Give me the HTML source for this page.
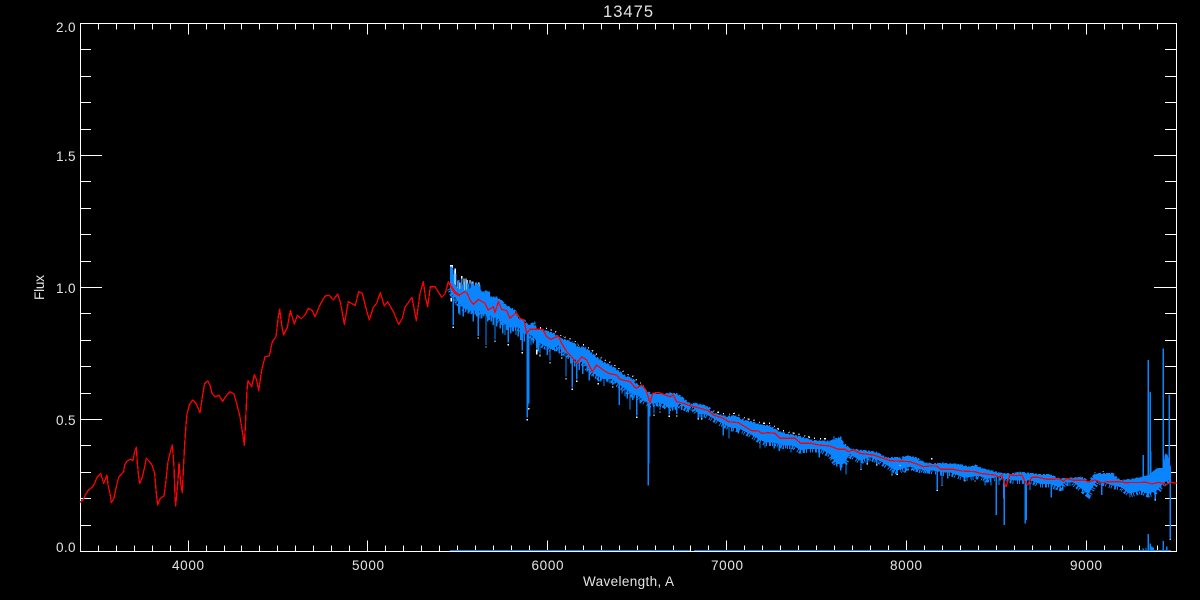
<!DOCTYPE html>
<html>
<head>
<meta charset="utf-8">
<title>13475</title>
<style>
html,body{margin:0;padding:0;background:#000;width:1200px;height:600px;overflow:hidden}
svg{display:block}
text{font-family:"Liberation Sans",sans-serif;fill:#e4e4e4;font-size:13.5px}
.c *{vector-effect:non-scaling-stroke;shape-rendering:crispEdges}
.b{fill:#0a84ff;stroke:none}
.s{fill:none;stroke:#0a84ff;stroke-width:1.4}
.w{fill:none;stroke:#fff;stroke-width:1.4}
.r{fill:none;stroke:#f00;stroke-width:1.3;stroke-linejoin:round}
.ax{fill:none;stroke:#fff;stroke-width:1;shape-rendering:crispEdges}
.cb{fill:none;stroke:#0a84ff;stroke-width:7;stroke-dasharray:1 1 1 2 2 1 1 3}
.cw{fill:none;stroke:#fff;stroke-width:1.4;stroke-dasharray:1 3 2 4 1 5}
.n{fill:none;stroke:#000;stroke-width:5;stroke-dasharray:1 3 2 2 1 4 1 2}
</style>
</head>
<body>
<svg width="1200" height="600" viewBox="0 0 1200 600" xmlns="http://www.w3.org/2000/svg">
<rect width="1200" height="600" fill="#000"/>

<!-- axes -->
<path class="ax" d="M80.5 23.5H1176.5V551.5H80.5Z"/>
<g id="xt">
<path class="ax" transform="translate(0,23.5)" d="M98.5 0v6M116.5 0v6M134.5 0v6M152.5 0v6M170.5 0v6M188.5 0v11M206.5 0v6M224.5 0v6M241.5 0v6M259.5 0v6M277.5 0v6M295.5 0v6M313.5 0v6M331.5 0v6M349.5 0v6M367.5 0v11M385.5 0v6M403.5 0v6M421.5 0v6M439.5 0v6M457.5 0v6M475.5 0v6M493.5 0v6M511.5 0v6M529.5 0v6M547.5 0v11M565.5 0v6M583.5 0v6M601.5 0v6M619.5 0v6M637.5 0v6M655.5 0v6M673.5 0v6M690.5 0v6M708.5 0v6M726.5 0v11M744.5 0v6M762.5 0v6M780.5 0v6M798.5 0v6M816.5 0v6M834.5 0v6M852.5 0v6M870.5 0v6M888.5 0v6M906.5 0v11M924.5 0v6M942.5 0v6M960.5 0v6M978.5 0v6M996.5 0v6M1014.5 0v6M1032.5 0v6M1050.5 0v6M1068.5 0v6M1086.5 0v11M1104.5 0v6M1122.5 0v6M1139.5 0v6M1157.5 0v6"/>
<path class="ax" transform="matrix(1,0,0,-1,0,551.5)" d="M98.5 0v6M116.5 0v6M134.5 0v6M152.5 0v6M170.5 0v6M188.5 0v11M206.5 0v6M224.5 0v6M241.5 0v6M259.5 0v6M277.5 0v6M295.5 0v6M313.5 0v6M331.5 0v6M349.5 0v6M367.5 0v11M385.5 0v6M403.5 0v6M421.5 0v6M439.5 0v6M457.5 0v6M475.5 0v6M493.5 0v6M511.5 0v6M529.5 0v6M547.5 0v11M565.5 0v6M583.5 0v6M601.5 0v6M619.5 0v6M637.5 0v6M655.5 0v6M673.5 0v6M690.5 0v6M708.5 0v6M726.5 0v11M744.5 0v6M762.5 0v6M780.5 0v6M798.5 0v6M816.5 0v6M834.5 0v6M852.5 0v6M870.5 0v6M888.5 0v6M906.5 0v11M924.5 0v6M942.5 0v6M960.5 0v6M978.5 0v6M996.5 0v6M1014.5 0v6M1032.5 0v6M1050.5 0v6M1068.5 0v6M1086.5 0v11M1104.5 0v6M1122.5 0v6M1139.5 0v6M1157.5 0v6"/>
<path class="ax" transform="translate(80,0)" d="M0 49.5h11M0 76.5h11M0 102.5h11M0 129.5h11M0 155.5h22M0 181.5h11M0 208.5h11M0 234.5h11M0 261.5h11M0 287.5h22M0 313.5h11M0 340.5h11M0 366.5h11M0 393.5h11M0 419.5h22M0 445.5h11M0 472.5h11M0 498.5h11M0 525.5h11"/>
<path class="ax" transform="matrix(-1,0,0,1,1176,0)" d="M0 49.5h11M0 76.5h11M0 102.5h11M0 129.5h11M0 155.5h22M0 181.5h11M0 208.5h11M0 234.5h11M0 261.5h11M0 287.5h22M0 313.5h11M0 340.5h11M0 366.5h11M0 393.5h11M0 419.5h22M0 445.5h11M0 472.5h11M0 498.5h11M0 525.5h11"/>
</g>

<!-- labels -->
<text x="603" y="17" style="font-size:16.5px" textLength="50">13475</text>
<text x="56" y="32" textLength="19.5">2.0</text>
<text x="56" y="161" textLength="19.5">1.5</text>
<text x="56" y="293" textLength="19.5">1.0</text>
<text x="56" y="425" textLength="19.5">0.5</text>
<text x="56" y="552" textLength="19.5">0.0</text>
<text x="172" y="570" textLength="32">4000</text>
<text x="352" y="570" textLength="32">5000</text>
<text x="531.5" y="570" textLength="32">6000</text>
<text x="711" y="570" textLength="32">7000</text>
<text x="890" y="570" textLength="32">8000</text>
<text x="1070" y="570" textLength="32">9000</text>
<text x="583" y="586" textLength="91">Wavelength, A</text>
<text transform="translate(44,300) rotate(-90)" textLength="25">Flux</text>

<!-- spectrum: 5450-6900 A -->
<g class="c" transform="translate(430,250) scale(.33333)">
<path class="w" d="M62 45V80M67 45V75M76 55V110M84 92V120M90 98V120M95 78V120M102 85V120M108 85V120M112 90V120M120 90V120M126 94V120M138 97V110M146 97V110"/>
<path class="w" transform="translate(0,4)" d="M64 140V150M70 225V230M145 258V262M168 285V289M195 268V272M235 278V282M277 302V306M292 503V507M296 470V474M320 295V310M330 310V316M360 332V336M395 318V322M408 380V384M427 412V416M440 388V392M505 395V399M548 405V409M620 496V500M672 490V494M690 480V484M718 493V497M740 492V496"/>
<path class="cw" transform="translate(0,-6)" d="M300 238L345 240L375 250L395 265L430 275L445 290L465 290L495 315L520 335L545 345L565 360L590 378L610 385L625 405L640 405"/>
<path class="b" d="M60 50L68 50L72 100L85 115L100 120L115 118L130 110L145 100L155 125L175 122L180 140L200 140L215 150L230 165L250 175L262 185L265 205L285 208L295 225L315 212L320 235L345 240L375 250L395 265L430 275L445 290L465 290L495 315L520 335L545 345L565 360L590 378L610 385L625 405L640 405L650 420L665 430L700 430L720 428L745 430L780 460L780 480L765 472L750 462L735 470L715 474L700 462L680 457L660 462L640 452L625 437L605 432L580 412L565 402L545 387L520 387L500 377L480 362L460 337L445 332L425 322L405 307L385 287L365 297L345 287L325 277L305 257L285 247L265 232L245 232L225 222L205 207L185 197L165 192L145 182L125 182L105 177L90 162L75 142L62 125L60 115Z"/>
<path class="n" transform="translate(0,-5)" d="M160 125L175 122L180 140L200 140L215 150L230 165L250 175L262 185L265 205L285 208L295 225L315 212L320 235L345 240L375 250L395 265L430 275L445 290L465 290L495 315L520 335L545 345L565 360L590 378L610 385L625 405L640 405L650 420L665 430L700 430L720 428L745 430L780 460"/>
<path class="cb" d="M60 115L75 142L90 162L105 177L125 182L145 182L165 192L185 197L205 207L225 222L245 232L265 232L285 247L305 257L325 277L345 287L365 297L385 287L405 307L425 322L445 332L460 337L480 362L500 377L520 387L545 387L565 402L580 412L605 432L625 437L640 452L660 462L680 457L700 462L715 474L735 470L750 462L765 472L780 480"/>
<path class="s" d="M64 55V140M70 100V225M72 60V150M78 70V165M86 90V190M90 120V195M95 85V170M100 105V200M106 95V175M111 90V185M115 100V175M120 100V185M125 100V190M130 95V215M135 105V195M140 100V200M145 100V258M150 105V205M155 135V205M161 125V200M168 120V285M173 125V215M178 125V210M184 140V215M190 145V225M195 150V268M200 140V230M205 150V190M211 150V235M218 155V250M225 170V255M230 170V240M235 180V278M242 180V250M250 180V245M258 190V255M265 205V260M272 205V270M277 215V302M283 210V275M292 235V503M294 235V470M296 235V460M303 235V285M310 225V280M320 240V295M325 240V305M330 250V310M338 240V290M345 250V300M352 250V315M360 260V332M368 255V300M380 270V305M388 265V310M395 275V318M402 270V320M408 280V380M415 280V325M422 280V340M427 290V412M434 285V350M440 300V388M448 295V360M458 305V372M465 300V350M472 320V365M478 330V392M490 320V380M498 330V385M505 340V395M512 335V385M522 350V408M530 350V395M540 350V400M548 360V405M556 360V400M568 380V465M576 380V430M585 390V440M592 385V445M600 400V478M608 395V450M620 410V496M630 410V460M640 420V445M657 430V540M659 430V500M672 430V490M682 435V470M690 435V480M703 435V475M718 435V493M728 435V480M740 440V492M755 450V480M765 460V480M775 465V488"/>
</g>

<!-- spectrum: 6900-8000 A -->
<g class="c" transform="translate(630,370) scale(.33333)">
<path class="s" d="M55 80V347M56 80V280M57 80V280"/>
<path class="cw" transform="translate(0,-5)" d="M250 128L290 138L315 135L345 150L370 155L400 165L420 165L445 182L470 190L510 198L550 210L600 212"/>
<path class="b" d="M180 107L192 97L225 105L240 112L250 128L290 138L315 135L345 150L370 155L400 165L420 165L445 182L470 190L510 198L550 210L600 212L615 205L630 200L640 215L660 235L700 240L740 245L770 262L820 260L860 265L900 282L900 297L880 300L860 287L830 292L800 302L780 292L750 272L720 262L690 272L660 252L640 282L620 282L600 252L570 237L540 237L510 240L490 227L460 227L430 217L405 217L385 207L360 192L330 177L300 172L270 157L245 142L225 132L205 132L190 112L180 110Z"/>
<path class="n" transform="translate(0,-5)" d="M192 97L225 105L240 112L250 128L290 138L315 135L345 150L370 155L400 165L420 165L445 182L470 190L510 198L550 210L600 212L615 205L630 200L640 215L660 235L700 240L740 245L770 262L820 260L860 265L900 282"/>
<path class="cb" d="M180 110L190 112L205 132L225 132L245 142L270 157L300 172L330 177L360 192L385 207L405 217L430 217L460 227L490 227L510 240L540 237L570 237L600 252L620 282L640 282L660 252L690 272L720 262L750 272L780 292L800 302L830 292L860 287L880 300L900 297"/>
<path class="s" d="M205 120V145M215 120V145M280 150V197M297 160V205M305 160V185M325 165V190M390 190V235M405 190V232M433 200V235M448 205V243M467 210V235M483 215V248M520 220V248M568 225V262M605 220V268M612 198V280M620 205V290M632 200V302M648 240V313M693 250V297M712 250V280M740 260V284M786 270V313M802 270V312M825 255V305M855 275V305M892 290V310"/>
<path class="w" d="M205 145v3M215 145v3M786 313v3M802 312v3M693 297v3M712 280v3M740 284v3M825 305v3"/>
</g>

<!-- spectrum: 8000-9500 A -->
<g class="c" transform="translate(900,340) scale(.33333)">
<path class="b" d="M0 358L15 345L40 350L55 352L65 365L100 370L130 368L180 372L210 380L225 373L250 385L280 392L300 398L330 400L360 395L385 398L420 402L450 402L480 415L510 413L545 410L565 420L585 400L640 398L660 420L700 415L725 410L745 405L770 385L790 383L795 340L803 345L812 380L812 415L790 430L770 452L745 462L720 452L690 462L665 442L640 437L610 427L590 422L565 462L545 447L520 427L495 427L480 442L450 432L420 432L395 422L370 422L345 422L320 417L300 410L260 417L235 407L205 412L190 412L150 397L130 397L100 392L60 388L30 380L0 374Z"/>
<path class="n" transform="translate(0,-5)" d="M0 358L15 345L40 350L55 352L65 365L100 370L130 368L180 372L210 380L225 373L250 385L280 392L300 398L330 400L360 395L385 398L420 402L450 402L480 415L510 413L545 410L565 420L585 400L640 398L660 420L700 415L725 410"/>
<path class="cb" d="M0 374L30 380L60 388L100 392L130 397L150 397L190 412L205 412L235 407L260 417L300 410L320 417L345 422L370 422L395 422L420 432L450 432L480 442L495 427L520 427L545 447L565 462L590 422L610 427L640 437L665 442L690 462L720 452L745 462L770 452L790 430L812 415"/>
<path class="s" d="M112 380V450M126 390V436M143 390V415M255 400V437M273 400V437M289 405V525M297 405V435M313 405V555M311 405V475M376 410V550M379 410V540M390 410V450M420 410V430M454 415V473M465 415V450M488 425V452M548 420V462M605 410V465M690 425V472M730 345V420M745 60V460M751 156V460M753 335V460M766 420V478M790 25V430M808 165V430M811 380V600M725 420V465M782 420V445"/>
<path class="w" d="M112 450v3M766 478v3M811 598v2M126 436v2M225 422v3M195 422v3M0 375v3M95 358v-4M585 398v-2M610 396v-2"/>
<path class="s" d="M745 582V630M751 610V630M755 620V630M760 622V630M790 603V630M800 620V630M730 625V630M738 624V630"/>
</g>

<!-- bottom blue line -->
<path d="M450 550.5H690M694 550.5H1171" fill="none" stroke="#0a84ff" stroke-width="1" shape-rendering="crispEdges"/>

<!-- red model -->
<g class="c">
<g transform="translate(78,430) scale(.33333)">
<polyline class="r" points="5,218 8,215 15,210 22,195 30,182 44,170 50,160 57,142 68,130 77,160 87,135 90,165 96,190 100,218 108,205 115,170 122,142 137,125 140,105 148,92 158,88 165,92 170,65 175,52 178,100 182,140 185,160 193,142 200,110 205,85 212,92 222,105 230,130 235,190 239,225 247,205 258,198 263,160 270,95 277,65 283,45 288,110 291,195 293,228 300,150 303,98 308,160 313,188 317,100 320,42 323,0"/>
</g>
<g transform="translate(60,270) scale(.33333)">
<polyline class="r" points="377,480 378,465 381,432 388,405 398,390 408,400 420,428 428,375 434,340 443,333 450,345 456,370 465,380 477,376 488,394 498,378 510,365 522,372 530,400 540,440 548,490 553,526 558,430 561,360 564,332 575,350 583,314 590,330 596,362 605,300 615,260 628,258 637,215 648,200 655,140 659,118 665,165 671,195 682,172 691,122 703,162 712,136 724,146 735,135 745,115 757,122 765,140 780,105 795,78 808,76 820,90 833,72 842,100 853,163 865,95 878,102 886,106 896,65 907,70 918,115 928,150 940,112 950,100 961,68 973,108 983,95 1000,125 1016,163 1027,145 1035,112 1056,82 1069,152 1080,70 1090,35 1097,85 1103,110 1111,50 1125,50 1145,82 1155,72 1165,35 1175,55 1185,70 1200,78"/>
</g>
<g transform="translate(430,250) scale(.33333)">
<polyline class="r" points="60,100 65,110 75,125 88,135 105,125 112,130 120,150 130,163 145,148 165,160 175,180 190,170 195,188 205,155 215,178 230,182 240,205 258,188 270,205 282,210 290,250 300,238 338,238 350,260 362,268 385,258 395,280 410,305 425,320 440,340 455,320 470,330 487,365 500,345 520,360 535,370 560,375 570,388 600,395 618,415 635,405 648,420 660,458 668,430 685,427 720,440 730,435 740,455 760,460 780,467"/>
</g>
<g transform="translate(630,370) scale(.33333)">
<polyline class="r" points="180,107 200,112 235,122 250,135 280,145 295,155 325,158 345,170 365,182 385,183 395,190 415,188 435,190 450,205 495,205 512,220 545,220 565,225 600,228 625,238 645,238 655,245 670,240 690,250 730,255 760,265 780,272 840,275 860,282 880,290 900,288"/>
</g>
<g transform="translate(900,340) scale(.33333)">
<polyline class="r" points="90,378 110,378 122,388 160,388 185,393 225,395 240,400 265,403 285,405 297,412 305,405 312,425 318,440 330,405 350,407 365,405 375,425 383,435 395,412 415,412 440,418 480,417 490,424 500,416 520,421 555,421 565,426 585,420 605,428 625,425 660,425 675,428 740,427 755,432 775,427 800,433 815,427 830,430"/>
</g>
</g>
</svg>
</body>
</html>
